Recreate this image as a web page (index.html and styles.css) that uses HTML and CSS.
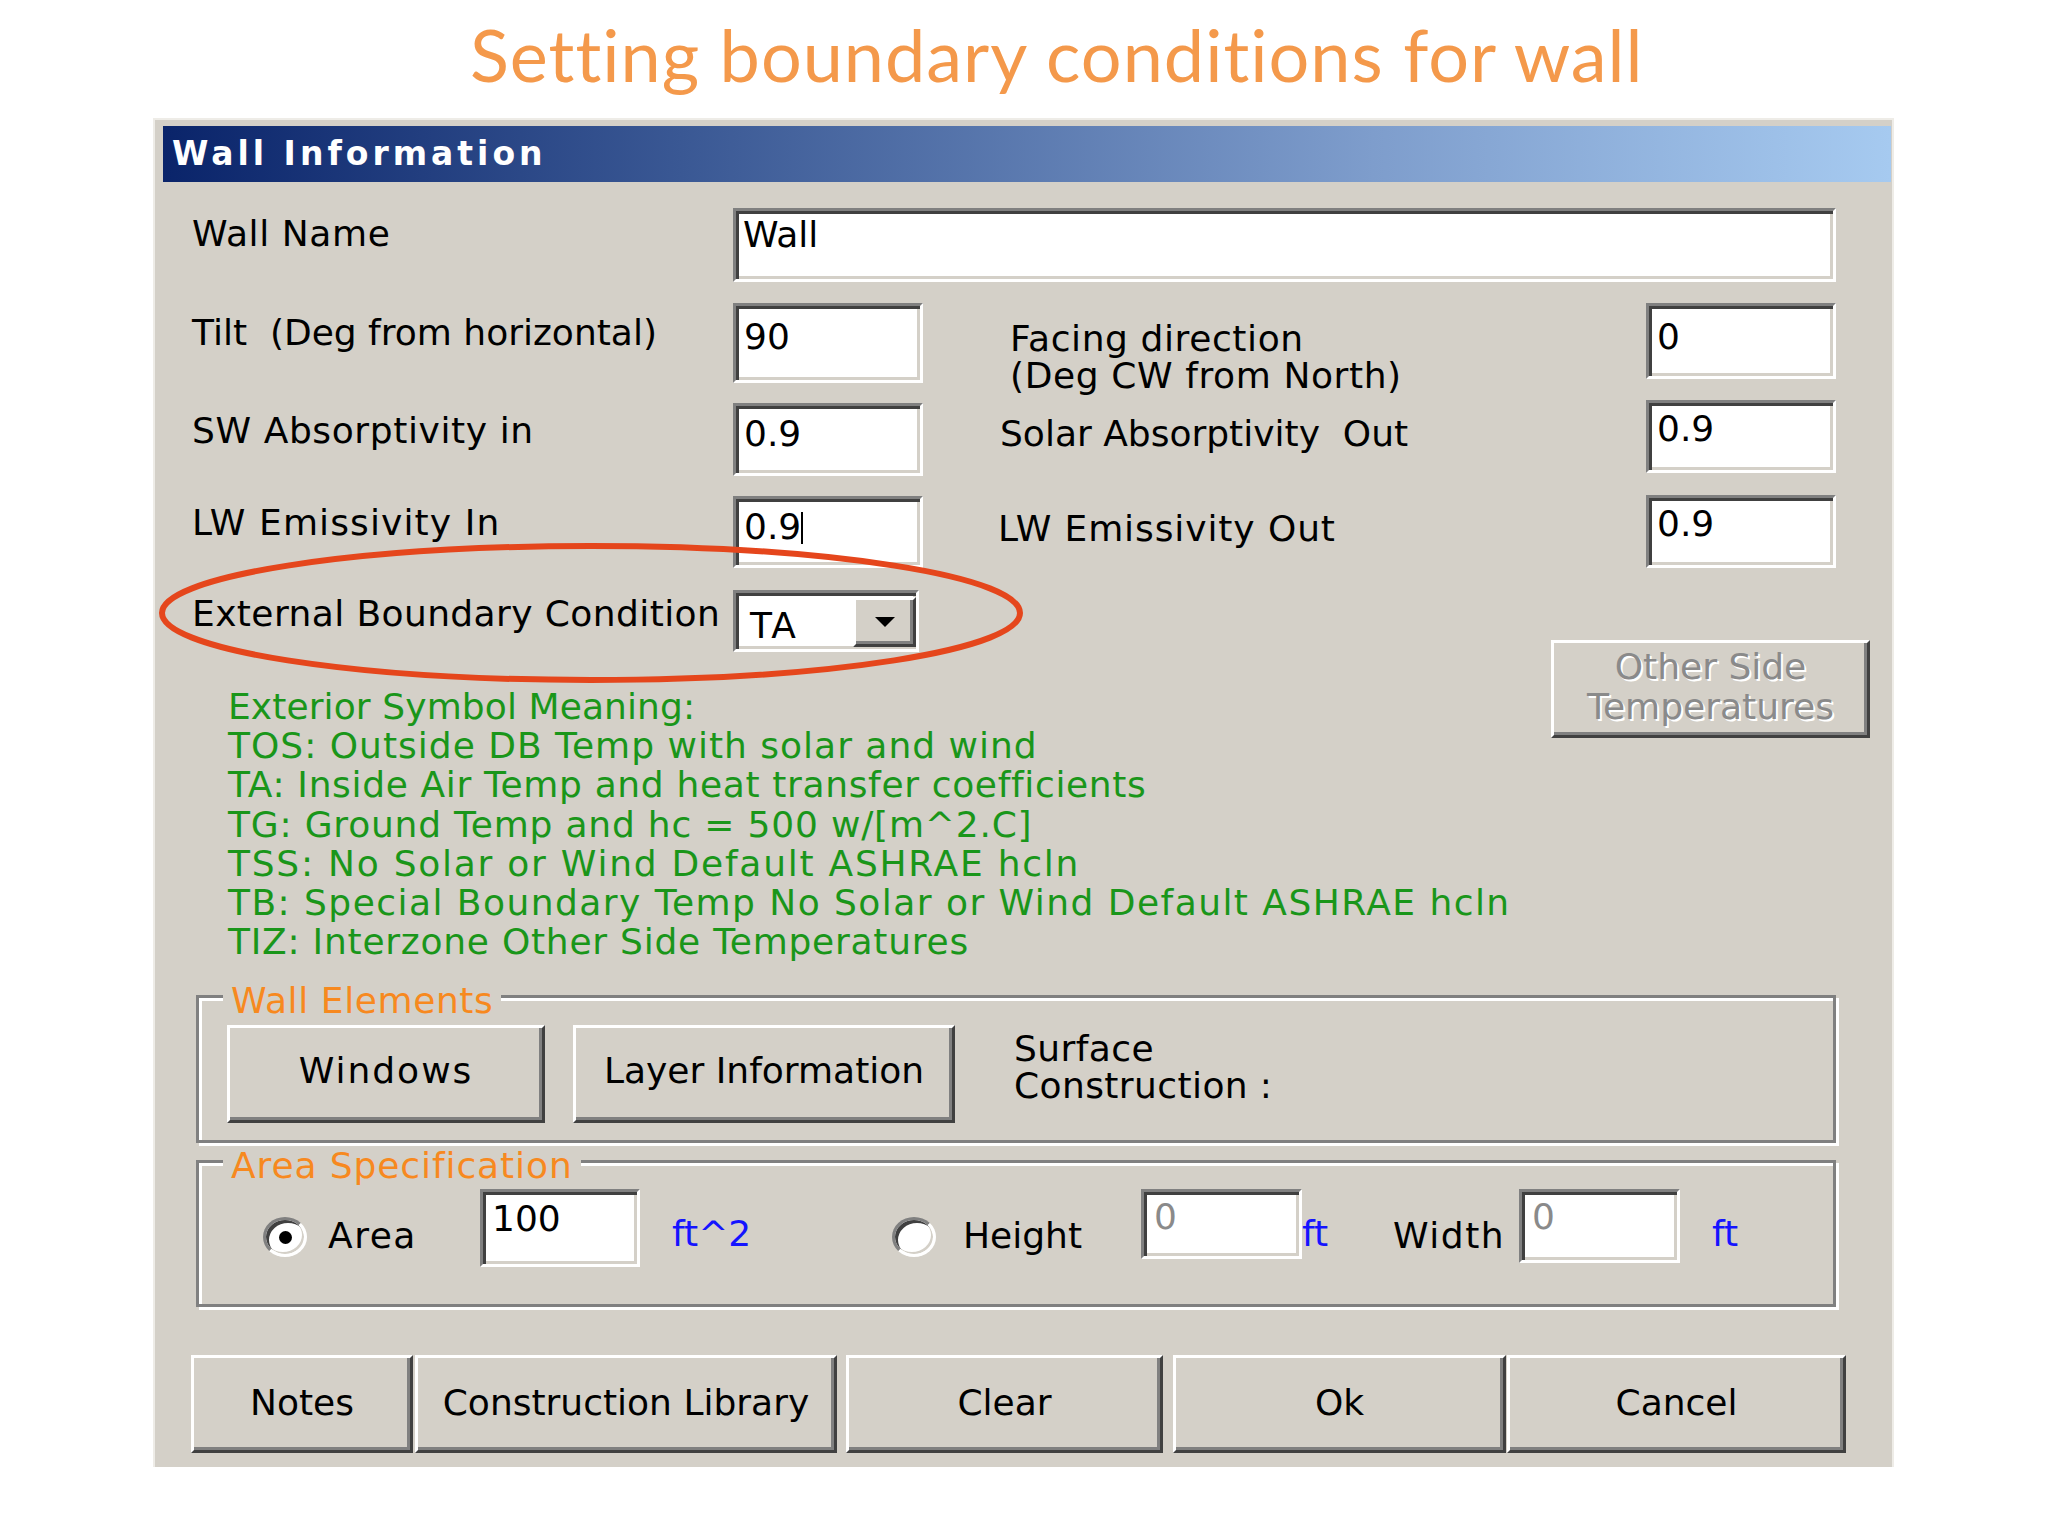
FILE: index.html
```html
<!DOCTYPE html>
<html>
<head>
<meta charset="utf-8">
<link rel="stylesheet" href="styles.css">
</head>
<body>
<div class="page">
  <h1 class="title">Setting boundary conditions for wall</h1>
  <div class="dialog">
    <div class="titlebar">Wall Information</div>

    <div class="row row-name">
      <div class="lbl">Wall Name</div>
      <div class="field field-name">Wall</div>
    </div>

    <div class="row row-tilt">
      <div class="lbl">Tilt&nbsp; (Deg from horizontal)</div>
      <div class="field field-l">90</div>
      <div class="rlbl">Facing direction<br>(Deg CW from North)</div>
      <div class="field field-r">0</div>
    </div>

    <div class="row row-sw">
      <div class="lbl">SW Absorptivity in</div>
      <div class="field field-l">0.9</div>
      <div class="rlbl">Solar Absorptivity&nbsp; Out</div>
      <div class="field field-r">0.9</div>
    </div>

    <div class="row row-lw">
      <div class="lbl">LW Emissivity In</div>
      <div class="field field-l">0.9<span class="caret"></span></div>
      <div class="rlbl">LW Emissivity Out</div>
      <div class="field field-r">0.9</div>
    </div>

    <div class="mid">
      <div class="mid-left">
        <div class="row-ebc">
          <div class="lbl">External Boundary Condition</div>
          <div class="combo">
            <span class="combo-val">TA</span>
            <span class="combo-btn"><span class="arrow"></span></span>
          </div>
        </div>
        <div class="symbols">
          <div class="sym sym-1">Exterior Symbol Meaning:</div>
          <div class="sym sym-2">TOS: Outside DB Temp with solar and wind</div>
          <div class="sym sym-3">TA: Inside Air Temp and heat transfer coefficients</div>
          <div class="sym sym-4">TG: Ground Temp and hc = 500 w/[m^2.C]</div>
          <div class="sym sym-5">TSS: No Solar or Wind Default ASHRAE hcln</div>
          <div class="sym sym-6">TB: Special Boundary Temp No Solar or Wind Default ASHRAE hcln</div>
          <div class="sym sym-7">TIZ: Interzone Other Side Temperatures</div>
        </div>
      </div>
      <div class="btn btn-other">Other Side<br>Temperatures</div>
    </div>

    <div class="group group-elements">
      <span class="legend legend-elements">Wall Elements</span>
      <div class="btn btn-windows">Windows</div>
      <div class="btn btn-layer">Layer Information</div>
      <div class="surface">Surface<br>Construction :</div>
    </div>

    <div class="group group-area">
      <span class="legend legend-area">Area Specification</span>
      <span class="radio radio-area checked"></span>
      <span class="alabel alabel-area">Area</span>
      <div class="field field-area">100</div>
      <span class="unit unit-area">ft^2</span>
      <span class="radio radio-height"></span>
      <span class="alabel alabel-height">Height</span>
      <div class="field field-dim field-h">0</div>
      <span class="unit unit-h">ft</span>
      <span class="alabel alabel-width">Width</span>
      <div class="field field-dim field-w">0</div>
      <span class="unit unit-w">ft</span>
    </div>

    <div class="buttons">
      <div class="btn btn-notes">Notes</div>
      <div class="btn btn-lib">Construction Library</div>
      <div class="btn btn-clear">Clear</div>
      <div class="btn btn-ok">Ok</div>
      <div class="btn btn-cancel">Cancel</div>
    </div>
  </div>

  <svg class="ring" width="870" height="146" viewBox="0 0 870 146">
    <ellipse cx="435" cy="72" rx="429" ry="67" fill="none" stroke="#e5461c" stroke-width="6"/>
  </svg>
</div>
</body>
</html>
```

FILE: styles.css
```css
html, body {
  margin: 0;
  padding: 0;
  background: #ffffff;
}

.page {
  position: relative;
  width: 2048px;
  height: 1536px;
  overflow: hidden;
  background: #ffffff;
}

.title {
  margin: 0;
  padding: 18px 0 0 470px;
  height: 72px;
  font-family: Lato, "Open Sans", sans-serif;
  font-weight: 400;
  font-size: 72px;
  line-height: 72px;
  letter-spacing: 1px;
  color: #f4994b;
  white-space: nowrap;
}

.dialog {
  margin: 28px 0 0 153px;
  width: 1741px;
  height: 1349px;
  box-sizing: border-box;
  background: #d4d0c8;
  box-shadow: inset 2px 2px 0 #eeece7, inset -2px 0 0 #eeece7;
  overflow: hidden;
  font-family: "DejaVu Sans", Verdana, sans-serif;
  font-size: 36px;
  line-height: 36px;
  color: #000;
}

.titlebar {
  margin: 8px 3px 0 10px;
  height: 56px;
  padding-left: 9px;
  background: linear-gradient(to right, #0a246a 0%, #3a5894 30%, #7e9dcc 70%, #a6caf0 100%);
  color: #fff;
  font-weight: bold;
  font-size: 33px;
  line-height: 56px;
  letter-spacing: 4px;
  white-space: nowrap;
}

/* ---------- form rows ---------- */
.row {
  display: grid;
  grid-template-columns: 580px 190px 723px 190px;
  align-items: start;
}

.lbl {
  padding-left: 39px;
  white-space: nowrap;
}

.rlbl {
  white-space: nowrap;
}

.field {
  box-sizing: border-box;
  background: #fff;
  border: 3px solid;
  border-color: #808080 #ffffff #ffffff #808080;
  box-shadow: inset 3px 3px 0 #404040, inset -3px -3px 0 #d4d0c8;
  padding: 10px 0 0 8px;
  white-space: nowrap;
}

.field-l, .field-r {
  width: 190px;
}

.row-name {
  margin-top: 26px;
  height: 74px;
}
.row-name .lbl { margin-top: 8px; letter-spacing: 0.6px; }
.field-name {
  grid-column: 2 / 5;
  height: 74px;
  padding: 6px 0 0 7px;
}

.row-tilt {
  margin-top: 21px;
  height: 80px;
}
.row-tilt .lbl { margin-top: 12px; }
.row-tilt .field-l { height: 80px; padding-top: 13px; }
.row-tilt .rlbl { margin-top: 17px; padding-left: 87px; line-height: 37px; letter-spacing: 0.6px; }
.row-tilt .field-r { height: 76px; padding-top: 13px; }

.row-sw {
  margin-top: 20px;
  height: 73px;
}
.row-sw .lbl { margin-top: 10px; letter-spacing: 0.6px; }
.row-sw .field-l { height: 73px; }
.row-sw .rlbl { margin-top: 13px; padding-left: 77px; }
.row-sw .field-r { height: 73px; margin-top: -3px; padding-top: 8px; }

.row-lw {
  margin-top: 20px;
  height: 72px;
}
.row-lw .lbl { margin-top: 9px; letter-spacing: 1.1px; }
.row-lw .field-l { height: 72px; }
.row-lw .rlbl { margin-top: 15px; padding-left: 75px; letter-spacing: 0.9px; }
.row-lw .field-r { height: 73px; margin-top: -1px; padding-top: 8px; }

.caret {
  display: inline-block;
  width: 0;
  height: 32px;
  border-left: 2px solid #000;
  vertical-align: -5px;
}

/* ---------- middle block ---------- */
.mid {
  display: flex;
  align-items: flex-start;
  margin-top: 22px;
}

.mid-left {
  flex: 1;
}

.row-ebc {
  display: flex;
  align-items: flex-start;
  height: 62px;
}
.row-ebc .lbl {
  width: 580px;
  box-sizing: border-box;
  margin-top: 6px;
  letter-spacing: 0.4px;
}

.combo {
  display: flex;
  align-items: flex-start;
  width: 186px;
  height: 62px;
  box-sizing: border-box;
  background: #fff;
  border: 3px solid;
  border-color: #808080 #ffffff #ffffff #808080;
  box-shadow: inset 3px 3px 0 #404040, inset -3px -3px 0 #d4d0c8;
}

.combo-val {
  flex: 1;
  padding: 15px 0 0 14px;
  letter-spacing: 2px;
}

.combo-btn {
  display: flex;
  align-items: center;
  justify-content: center;
  width: 63px;
  height: 50px;
  margin-top: 4px;
  box-sizing: border-box;
  background: #d4d0c8;
  border: 3px solid;
  border-color: #ffffff #404040 #404040 #ffffff;
  box-shadow: inset -3px -3px 0 #808080;
}

.arrow {
  width: 0;
  height: 0;
  border-left: 10px solid transparent;
  border-right: 10px solid transparent;
  border-top: 10px solid #000;
}

.symbols {
  margin-top: 35px;
  padding-left: 75px;
  color: #1a961a;
  line-height: 39.2px;
  white-space: nowrap;
}

.sym-1 { letter-spacing: 0.1px; }
.sym-2 { letter-spacing: 1px; }
.sym-3 { letter-spacing: 0.65px; }
.sym-4 { letter-spacing: 0.8px; }
.sym-5 { letter-spacing: 1.75px; }
.sym-6 { letter-spacing: 1.45px; }
.sym-7 { letter-spacing: 0.75px; }

/* ---------- buttons ---------- */
.btn {
  box-sizing: border-box;
  background: #d4d0c8;
  border: 3px solid;
  border-color: #ffffff #404040 #404040 #ffffff;
  box-shadow: inset -3px -3px 0 #808080;
  text-align: center;
  white-space: nowrap;
}

.btn-other {
  width: 319px;
  height: 98px;
  margin-top: 50px;
  margin-right: 24px;
  padding-top: 4px;
  line-height: 40px;
  color: #8a8a8a;
  text-shadow: 2px 2px 0 #ffffff;
}

/* ---------- group boxes ---------- */
.group {
  position: relative;
  display: flex;
  align-items: flex-start;
  margin-left: 43px;
  width: 1640px;
  box-sizing: border-box;
  border: 3px solid #808080;
  box-shadow: 3px 3px 0 #ffffff, inset 3px 3px 0 #ffffff;
}

.legend {
  position: absolute;
  left: 24px;
  top: -15px;
  padding: 0 8px;
  background: #d4d0c8;
  color: #f7891f;
  white-space: nowrap;
}

.legend-elements { letter-spacing: 0.6px; }
.legend-area { letter-spacing: 0.9px; }

.group-elements {
  margin-top: 34px;
  height: 148px;
  padding: 27px 0 0 28px;
}

.btn-windows {
  width: 318px;
  height: 98px;
  padding-top: 25px;
  letter-spacing: 2px;
}

.btn-layer {
  width: 382px;
  height: 98px;
  margin-left: 28px;
  padding-top: 25px;
}

.surface {
  margin-left: 59px;
  margin-top: 5px;
  line-height: 37px;
  letter-spacing: 0.4px;
  white-space: nowrap;
}

.group-area {
  margin-top: 17px;
  height: 147px;
  padding: 26px 0 0 64px;
}

.radio {
  position: relative;
  display: block;
  flex: none;
  width: 44px;
  height: 40px;
  margin-top: 28px;
  box-sizing: border-box;
  border-radius: 50%;
  background: #fff;
  border: 3px solid;
  border-color: #808080 #ffffff #ffffff #808080;
  box-shadow: inset 3px 3px 0 #404040, inset -2px -2px 0 #d4d0c8;
}

.radio.checked::after {
  content: "";
  position: absolute;
  left: 50%;
  top: 50%;
  width: 13px;
  height: 13px;
  margin: -6px 0 0 -6px;
  border-radius: 50%;
  background: #000;
}

.alabel {
  display: block;
  flex: none;
  margin-top: 29px;
  white-space: nowrap;
}

.alabel-area {
  width: 152px;
  margin-left: 21px;
  letter-spacing: 1.5px;
}

.field-area {
  width: 160px;
  height: 78px;
  padding: 9px 0 0 9px;
}

.unit {
  display: block;
  flex: none;
  margin-top: 27px;
  color: #1414ff;
  white-space: nowrap;
}

.unit-area {
  width: 220px;
  margin-left: 32px;
}

.alabel-height {
  width: 178px;
  margin-left: 27px;
}

.field-dim {
  width: 161px;
  padding: 7px 0 0 10px;
  color: #8a8a8a;
}

.field-h {
  height: 70px;
}

.unit-h {
  width: 91px;
}

.alabel-width {
  width: 126px;
  letter-spacing: 1.5px;
}

.field-w {
  height: 74px;
}

.unit-w {
  margin-left: 32px;
}

/* ---------- bottom buttons ---------- */
.buttons {
  display: flex;
  align-items: flex-start;
  margin-top: 48px;
}

.buttons .btn {
  height: 98px;
  padding-top: 27px;
}

.btn-notes { width: 222px; margin-left: 38px; }
.btn-lib { width: 422px; margin-left: 2px; }
.btn-clear { width: 317px; margin-left: 9px; }
.btn-ok { width: 333px; margin-left: 10px; }
.btn-cancel { width: 339px; margin-left: 1px; }

/* ---------- annotation ---------- */
.ring {
  position: absolute;
  left: 156px;
  top: 541px;
}
```
